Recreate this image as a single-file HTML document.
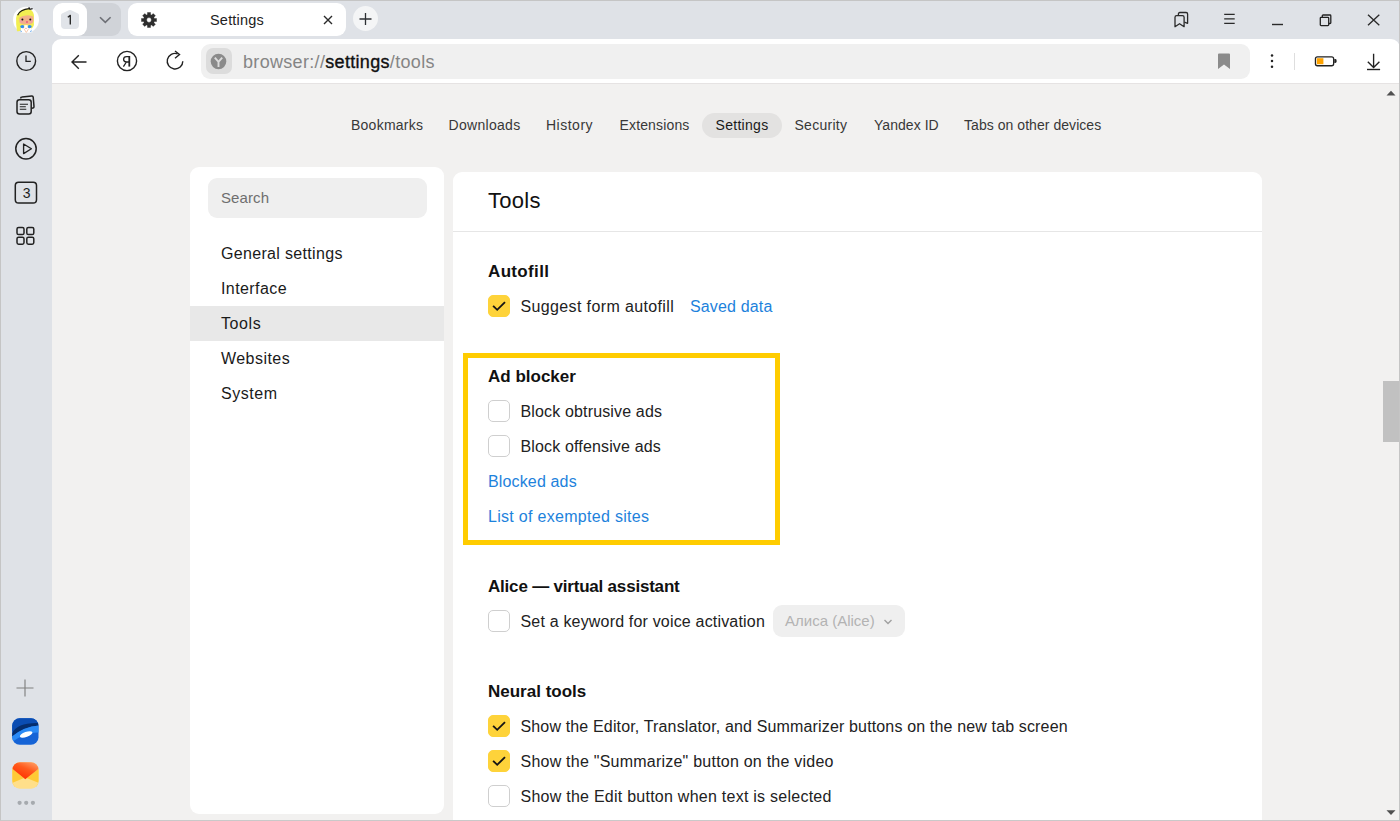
<!DOCTYPE html>
<html><head><meta charset="utf-8">
<style>
*{box-sizing:border-box;margin:0;padding:0}
html,body{width:1400px;height:821px;overflow:hidden;background:#dfe2e7;font-family:"Liberation Sans",sans-serif;color:#1f1f1f}
.abs{position:absolute}
.t{position:absolute;white-space:nowrap;line-height:1}
#frame{position:absolute;left:0;top:0;width:1400px;height:821px;border:1px solid #c5c5c5;border-bottom-color:#c9c9c9;pointer-events:none;z-index:50}
#toolbar{position:absolute;left:52px;top:39px;width:1348px;height:45px;background:#fff;border-radius:9px 9px 0 0;border-bottom:1px solid #e6e3e3}
#content{position:absolute;left:52px;top:84px;width:1348px;height:737px;background:#f2f1f0}
.nav{position:absolute;top:118px;font-size:14px;line-height:1;color:#383838;white-space:nowrap;letter-spacing:0.05px}
.panel{position:absolute;background:#fff}
.menu{position:absolute;left:221px;font-size:16px;line-height:1;color:#1a1a1a;white-space:nowrap;letter-spacing:0.2px}
.h{position:absolute;left:488px;font-size:17px;font-weight:700;line-height:1;color:#111;white-space:nowrap}
.row{position:absolute;left:520.5px;font-size:16px;line-height:1;color:#222;white-space:nowrap;letter-spacing:0.15px}
.link{position:absolute;font-size:16px;line-height:1;color:#1d82dc;white-space:nowrap;letter-spacing:0.15px}
.cb{position:absolute;left:488px;width:22px;height:22px;border-radius:5px;border:1px solid #cfcfcf;background:#fff}
.cb.on{background:#fed33a;border-color:#fed33a}
.cb.on svg{position:absolute;left:3px;top:5px}
</style></head><body>
<div id="frame"></div>

<!-- TAB BAR -->
<div class="abs" style="left:53px;top:3px;width:68px;height:33px;background:#d0d3d8;border-radius:9px"></div>
<div class="abs" style="left:53px;top:3px;width:34px;height:33px;background:#fff;border-radius:9px"></div>
<svg class="abs" style="left:60px;top:9px" width="20" height="21" viewBox="0 0 20 21"><path d="M10 1 Q10.6 1 11.2 1.3 L18 4.6 Q19 5.1 19 6.2 V16 Q19 20 15 20 H5 Q1 20 1 16 V6.2 Q1 5.1 2 4.6 L8.8 1.3 Q9.4 1 10 1 Z" fill="#e1e4e9"/><path d="M7.8 8.2 L10.3 6.4 V15.6" fill="none" stroke="#2a2a2a" stroke-width="1.4" stroke-linejoin="round"/></svg>
<svg class="abs" style="left:99px;top:16px" width="13" height="8" viewBox="0 0 13 8"><path d="M1 1.2 L6.3 6.4 L11.6 1.2" fill="none" stroke="#6e7076" stroke-width="1.6"/></svg>

<div class="abs" style="left:128px;top:3px;width:218px;height:33px;background:#fff;border-radius:9px"></div>
<svg class="abs" style="left:141px;top:12px" width="16" height="16" viewBox="0 0 16 16"><path fill-rule="evenodd" fill="#2e2e2e" stroke="#2e2e2e" stroke-width="0.4" stroke-linejoin="round" d="M13.38 6.45 L15.55 6.47 L15.55 9.53 L13.38 9.55 L12.90 10.71 L14.42 12.25 L12.25 14.42 L10.71 12.90 L9.55 13.38 L9.53 15.55 L6.47 15.55 L6.45 13.38 L5.29 12.90 L3.75 14.42 L1.58 12.25 L3.10 10.71 L2.62 9.55 L0.45 9.53 L0.45 6.47 L2.62 6.45 L3.10 5.29 L1.58 3.75 L3.75 1.58 L5.29 3.10 L6.45 2.62 L6.47 0.45 L9.53 0.45 L9.55 2.62 L10.71 3.10 L12.25 1.58 L14.42 3.75 L12.90 5.29 Z M10.4 8 A2.4 2.4 0 1 0 5.6 8 A2.4 2.4 0 1 0 10.4 8 Z"/></svg>
<div class="t" style="left:210px;top:13px;font-size:14.5px;color:#222;letter-spacing:0.2px">Settings</div>
<svg class="abs" style="left:323px;top:15px" width="10" height="10" viewBox="0 0 10 10"><path d="M1 1 L9 9 M9 1 L1 9" stroke="#2a2a2a" stroke-width="1.4"/></svg>
<div class="abs" style="left:353px;top:6px;width:25px;height:25px;border-radius:50%;background:#f4f5f6"></div>
<svg class="abs" style="left:359px;top:12px" width="13" height="14" viewBox="0 0 13 14"><path d="M6.5 1 V13 M0.5 7 H12.5" stroke="#2c2f33" stroke-width="1.3"/></svg>

<!-- window controls -->
<svg class="abs" style="left:1172px;top:10px" width="19" height="20" viewBox="0 0 19 20" fill="none" stroke="#2a2a2a" stroke-width="1.3" stroke-linejoin="round"><path d="M6.4 5.4 V4 Q6.4 2.5 7.9 2.5 H14.1 Q15.6 2.5 15.6 4 V13.3 L12.4 12.2"/><path d="M3 7.2 Q3 5.6 4.6 5.6 H10.5 Q12.1 5.6 12.1 7.2 V16.7 L7.55 13.7 L3 16.7 Z"/></svg>
<svg class="abs" style="left:1222px;top:11px" width="16" height="16" viewBox="0 0 16 16" stroke="#2a2a2a" stroke-width="1.3"><path d="M2.2 3.4 H12.7 M2.2 7.9 H12.7 M2.2 12.4 H12.7"/></svg>
<svg class="abs" style="left:1270px;top:15px" width="16" height="12" viewBox="0 0 16 12" stroke="#2a2a2a" stroke-width="1.4"><path d="M2 9.5 H13"/></svg>
<svg class="abs" style="left:1318px;top:12.8px" width="16" height="16" viewBox="0 0 16 16" fill="none" stroke="#222" stroke-width="1.3"><rect x="2.3" y="4.3" width="8.4" height="8.3" rx="0.8"/><path d="M4.3 4.1 V2.8 Q4.3 2 5.1 2 H12 Q12.8 2 12.8 2.8 V9.7 Q12.8 10.5 12 10.5 H10.8"/></svg>
<svg class="abs" style="left:1366px;top:13px" width="15" height="14" viewBox="0 0 15 14" stroke="#2a2a2a" stroke-width="1.35"><path d="M2 1.8 L13.3 12.2 M13.3 1.8 L2 12.2"/></svg>

<!-- SIDEBAR -->
<svg class="abs" style="left:10px;top:4px" width="32" height="32" viewBox="0 0 32 32">
 <circle cx="16" cy="15.7" r="13" fill="#fff"/>
 <path d="M9 8.5 Q12 4.5 18 4.8 Q23 5.5 23.9 11 L23.9 21 Q23 24.5 20 25 L12 26 Q9 27.8 7 27.2 Q5.8 20 6.1 14 Q6.3 10.5 9 8.5 Z" fill="#f2ee52"/>
 <path d="M9.3 13.5 Q10 10 14 9.8 L20 9.8 Q23.4 10.3 23.4 14.5 L23.4 17 Q23 20.4 18 20.4 L14 20.4 Q9.3 20.2 9.3 17 Z" fill="#f3b089"/>
 <path d="M8.6 14 Q10 6.6 16.5 6.5 Q22.8 6.6 23.8 12.8 Q20 10.6 16 11.4 Q12.2 11.8 8.6 14 Z" fill="#f2ee52"/>
 <path d="M7.6 11.2 Q10 5.5 19.3 4.6" fill="none" stroke="#1a1a1a" stroke-width="1.1"/>
 <path d="M18.8 3.2 L19.9 5.3 L22.6 4.6" fill="none" stroke="#1a1a1a" stroke-width="1.2"/>
 <circle cx="11.3" cy="17.2" r="1.3" fill="#f29aa8" opacity="0.7"/><circle cx="21.3" cy="17.2" r="1.3" fill="#f29aa8" opacity="0.7"/>
 <circle cx="12.4" cy="15.6" r="1" fill="#111"/><circle cx="20.3" cy="15.6" r="1" fill="#111"/>
 <ellipse cx="17" cy="17.9" rx="0.8" ry="1" fill="#e8457a"/>
 <path d="M11 24 L21 24 L22.5 28.5 L10.5 28.5 Z" fill="#fff"/>
 <path d="M13.8 24.5 L16.3 28.5 L18.8 24.5" fill="none" stroke="#f3b38a" stroke-width="0.7"/>
 <ellipse cx="12.3" cy="22.6" rx="2" ry="1.7" fill="#2f8ef0"/><ellipse cx="19.6" cy="22.6" rx="2" ry="1.7" fill="#2f8ef0"/>
 <rect x="14.3" y="21.2" width="3.3" height="3.2" fill="#fff"/><circle cx="16" cy="24.3" r="0.5" fill="#e03050"/>
 <path d="M10.5 25.5 L11.8 27.8 L10.8 28.3 Z M21.5 25.5 L20.2 27.8 L21.2 28.3 Z" fill="#3a8fe8"/>
</svg>
<svg class="abs" style="left:14px;top:49px" width="24" height="24" viewBox="0 0 24 24" fill="none" stroke="#222" stroke-width="1.4"><circle cx="12.2" cy="12" r="9.4"/><path d="M12 6.6 V12.3 H16.8" stroke-width="1.3"/></svg>
<svg class="abs" style="left:14px;top:93px" width="24" height="24" viewBox="0 0 24 24" fill="none" stroke="#222" stroke-width="1.5" stroke-linejoin="round"><path d="M6.5 5.5 Q6.8 4.2 8 4.1 L17.8 3 Q19 2.9 19.2 4.1 L20 13.5 Q20.1 14.7 19 15 L17.5 15.4"/><rect x="3" y="6.8" width="14.2" height="14.2" rx="2.5"/><path d="M5.8 11.2 H14 M5.8 13.7 H11.8 M5.8 16.2 H12.3" stroke-width="1.1"/></svg>
<svg class="abs" style="left:14px;top:137px" width="24" height="24" viewBox="0 0 24 24" fill="none" stroke="#222" stroke-width="1.5" stroke-linejoin="round"><circle cx="12" cy="11.7" r="10.2"/><path d="M9.6 7 V16.6 L17.4 11.8 Z" stroke-width="1.35"/></svg>
<svg class="abs" style="left:14px;top:181px" width="24" height="24" viewBox="0 0 24 24"><rect x="1.3" y="1.3" width="21.2" height="20.8" rx="3.3" fill="none" stroke="#222" stroke-width="1.5"/><text x="12.6" y="17.3" font-family="Liberation Sans" font-size="14" text-anchor="middle" fill="#1e1e1e">3</text></svg>
<svg class="abs" style="left:14px;top:224px" width="24" height="24" viewBox="0 0 24 24" fill="none" stroke="#222" stroke-width="1.5"><rect x="3" y="3.5" width="7" height="7" rx="1.6"/><rect x="12.8" y="3.5" width="7" height="7" rx="1.6"/><rect x="3" y="13.2" width="7" height="7" rx="1.6"/><rect x="12.8" y="13.2" width="7" height="7" rx="1.6"/></svg>
<svg class="abs" style="left:15px;top:678px" width="20" height="20" viewBox="0 0 20 20" stroke="#808080" stroke-width="1.15"><path d="M10 1.5 V18.5 M1.5 10 H18.5"/></svg>
<svg class="abs" style="left:12px;top:718px" width="27" height="27" viewBox="0 0 27 27">
 <defs><clipPath id="bc"><rect x="0.2" y="0.3" width="26.3" height="26.5" rx="7.5"/></clipPath></defs>
 <g clip-path="url(#bc)"><rect x="0" y="0" width="27" height="27" fill="#1563d6"/>
 <path d="M0 0 H27 V5 Q12 4.5 0 14 Z" fill="#0b4db2"/>
 <path d="M0 15 Q6 4 27 5 L27 7.5 Q12 8.5 0 18.5 Z" fill="#052e6e"/>
 <path d="M0 18.5 Q12 8.5 27 7.5 V14.5 Q14 14 0 24 Z" fill="#2a8af5"/>
 <ellipse cx="14.2" cy="16.4" rx="6.6" ry="2.5" transform="rotate(-20 14.2 16.4)" fill="#fff"/></g>
</svg>
<svg class="abs" style="left:12px;top:762px" width="27" height="27" viewBox="0 0 27 27">
 <defs><clipPath id="mc"><rect x="0.3" y="0.2" width="26.3" height="26.2" rx="7.5"/></clipPath><linearGradient id="mr" x1="0.9" y1="0" x2="0.35" y2="0.8"><stop offset="0" stop-color="#ffa56e"/><stop offset="0.55" stop-color="#ff5a1c"/><stop offset="1" stop-color="#ff3a08"/></linearGradient></defs>
 <g clip-path="url(#mc)"><rect x="0" y="0" width="27" height="27" fill="#ffdf8a"/><path d="M0 6.5 L13.3 17.2 L0 27 Z M27 6.5 L13.3 17.2 L27 27 Z" fill="#ffca35"/><path d="M0 17 L13.3 14.5 L27 17 V27 H0 Z" fill="none"/><path d="M0 21 L13.3 15.5 L27 21 V27 H0 Z" fill="#ffdf8a"/><path d="M0 0 H27 V6.5 L13.3 17.2 L0 6.5 Z" fill="url(#mr)"/></g>
</svg>
<svg class="abs" style="left:15px;top:799px" width="22" height="8" viewBox="0 0 22 8" fill="#a6aaaf"><circle cx="4.6" cy="3.8" r="2.1"/><circle cx="11.2" cy="3.8" r="2.1"/><circle cx="17.9" cy="3.8" r="2.1"/></svg>

<!-- TOOLBAR -->
<div id="toolbar"></div>
<svg class="abs" style="left:65.5px;top:49.5px" width="24" height="24" viewBox="0 0 24 24" fill="none" stroke="#222" stroke-width="1.4"><path d="M20.5 12 H6 M12.8 5.2 L6 12 L12.8 18.8"/></svg>
<svg class="abs" style="left:115px;top:49px" width="24" height="24" viewBox="0 0 24 24" fill="none" stroke="#222"><circle cx="12" cy="12" r="9.6" stroke-width="1.4"/><path d="M14.3 7 V17.6" stroke-width="1.8"/><path d="M14.3 7.6 H11.6 Q8.6 7.6 8.6 10.3 Q8.6 13 11.6 13 H14.3 M11.4 13 L8.4 17.6" stroke-width="1.3"/></svg>
<svg class="abs" style="left:163px;top:49px" width="24" height="24" viewBox="0 0 24 24" fill="none" stroke="#222" stroke-width="1.4"><path d="M19.8 12.2 A7.8 7.8 0 1 1 14.67 4.87"/><path d="M12 2 L16.5 5.5 L12 9.3"/></svg>
<div class="abs" style="left:201px;top:44px;width:1049px;height:35px;background:#f0f0f0;border-radius:9px"></div>
<div class="abs" style="left:205.7px;top:48px;width:26.2px;height:26.3px;background:#dcdcdc;border-radius:7px"></div>
<svg class="abs" style="left:210px;top:53px" width="17" height="17" viewBox="0 0 17 17"><circle cx="8.5" cy="8.5" r="7.8" fill="#8a8a8a"/><path d="M4.8 4.6 L8.5 8.8 L12.2 4.6 M8.5 8.8 V14" fill="none" stroke="#dcdcdc" stroke-width="1.9"/></svg>
<div class="t" style="left:243px;top:53px;font-size:18px;color:#858585;letter-spacing:0.32px">browser://<span style="color:#111;-webkit-text-stroke:0.35px #111">settings</span>/tools</div>
<svg class="abs" style="left:1217px;top:53px" width="14" height="17" viewBox="0 0 14 17"><path d="M1 1.5 Q1 0.5 2 0.5 H12 Q13 0.5 13 1.5 V16 L7 11.5 L1 16 Z" fill="#8b8b8b"/></svg>
<svg class="abs" style="left:1268px;top:52px" width="8" height="18" viewBox="0 0 8 18" fill="#222"><circle cx="4" cy="3.4" r="1.25"/><circle cx="4" cy="9" r="1.25"/><circle cx="4" cy="14.8" r="1.25"/></svg>
<div class="abs" style="left:1294px;top:53px;width:1px;height:17px;background:#dedede"></div>
<svg class="abs" style="left:1312px;top:53px" width="27" height="16" viewBox="0 0 27 16"><rect x="3.45" y="3.85" width="18.2" height="8.9" rx="2" fill="#fff" stroke="#222" stroke-width="1.3"/><rect x="4.8" y="5.2" width="6.6" height="6" fill="#ffa300"/><path d="M22.3 6 H23.3 Q24.6 6 24.6 7.4 V8.5 Q24.6 9.9 23.3 9.9 H22.3 Z" fill="#222"/></svg>
<svg class="abs" style="left:1362px;top:51px" width="22" height="22" viewBox="0 0 22 22" fill="none" stroke="#222" stroke-width="1.35"><path d="M11.6 2.8 V16.4 M5.8 10.7 L11.6 16.5 L17.4 10.7"/><path d="M5 18.5 H18.1" stroke-width="1.4"/></svg>

<!-- CONTENT -->
<div id="content"></div>
<!-- nav -->
<div class="abs" style="left:702px;top:113px;width:80px;height:25px;border-radius:13px;background:#e3e2e1"></div>
<div class="nav" style="left:351px;letter-spacing:0.25px">Bookmarks</div>
<div class="nav" style="left:448.5px;letter-spacing:0.3px">Downloads</div>
<div class="nav" style="left:546px;letter-spacing:0.5px">History</div>
<div class="nav" style="left:619.5px;letter-spacing:0.15px">Extensions</div>
<div class="nav" style="left:715.5px;color:#1a1a1a;letter-spacing:0.3px">Settings</div>
<div class="nav" style="left:794.5px;letter-spacing:0.28px">Security</div>
<div class="nav" style="left:874px">Yandex ID</div>
<div class="nav" style="left:964px">Tabs on other devices</div>

<!-- left panel -->
<div class="panel" style="left:190px;top:167px;width:254px;height:647px;border-radius:9px"></div>
<div class="abs" style="left:208px;top:178px;width:219px;height:40px;border-radius:9px;background:#efefef"></div>
<div class="t" style="left:221px;top:190px;font-size:15px;color:#6e6e6e;letter-spacing:0.1px">Search</div>
<div class="abs" style="left:190px;top:306px;width:254px;height:35px;background:#e8e8e8"></div>
<div class="menu" style="top:245.5px;letter-spacing:0.33px">General settings</div>
<div class="menu" style="top:280.5px;letter-spacing:0.42px">Interface</div>
<div class="menu" style="top:315.5px;letter-spacing:0.6px">Tools</div>
<div class="menu" style="top:350.5px;letter-spacing:0.45px">Websites</div>
<div class="menu" style="top:385.5px;letter-spacing:0.53px">System</div>

<!-- right panel -->
<div class="panel" style="left:453px;top:172px;width:809px;height:649px;border-radius:9px 9px 0 0"></div>
<div class="abs" style="left:453px;top:231px;width:809px;height:1px;background:#e6e6e6"></div>
<div class="t" style="left:488px;top:190px;font-size:22px;color:#111;letter-spacing:0.3px">Tools</div>

<div class="h" style="top:262.6px;letter-spacing:0.35px">Autofill</div>
<div class="cb on" style="top:295px"><svg width="16" height="12" viewBox="0 0 16 12"><path d="M1.1 4.8 L5.2 8.8 L13 1.1" fill="none" stroke="#151515" stroke-width="1.85"/></svg></div>
<div class="row" style="top:298.7px;letter-spacing:0.37px">Suggest form autofill</div>
<div class="link" style="left:690px;top:298.6px">Saved data</div>

<div class="abs" style="left:463px;top:353px;width:317px;height:192px;border:5px solid #ffcc00"></div>
<div class="h" style="top:367.6px">Ad blocker</div>
<div class="cb" style="top:400px"></div>
<div class="row" style="top:403.7px">Block obtrusive ads</div>
<div class="cb" style="top:435px"></div>
<div class="row" style="top:438.7px">Block offensive ads</div>
<div class="link" style="left:488px;top:474.1px">Blocked ads</div>
<div class="link" style="left:488px;top:509.1px;letter-spacing:0.3px">List of exempted sites</div>

<div class="h" style="top:577.6px;letter-spacing:-0.2px">Alice — virtual assistant</div>
<div class="cb" style="top:610px"></div>
<div class="row" style="top:613.7px;letter-spacing:0.18px">Set a keyword for voice activation</div>
<div class="abs" style="left:773px;top:605px;width:132px;height:32px;border-radius:9px;background:#efefef"></div>
<div class="t" style="left:785px;top:613px;font-size:15px;color:#b3b3b3">Алиса (Alice)</div>
<svg class="abs" style="left:883px;top:618px" width="10" height="8" viewBox="0 0 10 8"><path d="M1.5 2 L5 5.5 L8.5 2" fill="none" stroke="#a0a0a0" stroke-width="1.4"/></svg>

<div class="h" style="top:682.6px">Neural tools</div>
<div class="cb on" style="top:715px"><svg width="16" height="12" viewBox="0 0 16 12"><path d="M1.1 4.8 L5.2 8.8 L13 1.1" fill="none" stroke="#151515" stroke-width="1.85"/></svg></div>
<div class="row" style="top:718.7px">Show the Editor, Translator, and Summarizer buttons on the new tab screen</div>
<div class="cb on" style="top:750px"><svg width="16" height="12" viewBox="0 0 16 12"><path d="M1.1 4.8 L5.2 8.8 L13 1.1" fill="none" stroke="#151515" stroke-width="1.85"/></svg></div>
<div class="row" style="top:753.7px;letter-spacing:0.23px">Show the "Summarize" button on the video</div>
<div class="cb" style="top:785px"></div>
<div class="row" style="top:788.7px;letter-spacing:0.25px">Show the Edit button when text is selected</div>

<!-- scrollbar -->
<svg class="abs" style="left:1385px;top:89px" width="12" height="8" viewBox="0 0 12 8"><path d="M1.5 6.5 L6 1.8 L10.5 6.5 Z" fill="#505050"/></svg>
<div class="abs" style="left:1382.5px;top:381px;width:17px;height:61px;background:#c1c1c1"></div>
<svg class="abs" style="left:1385px;top:809px" width="12" height="8" viewBox="0 0 12 8"><path d="M1.5 1.3 L6 6 L10.5 1.3 Z" fill="#505050"/></svg>

</body></html>
